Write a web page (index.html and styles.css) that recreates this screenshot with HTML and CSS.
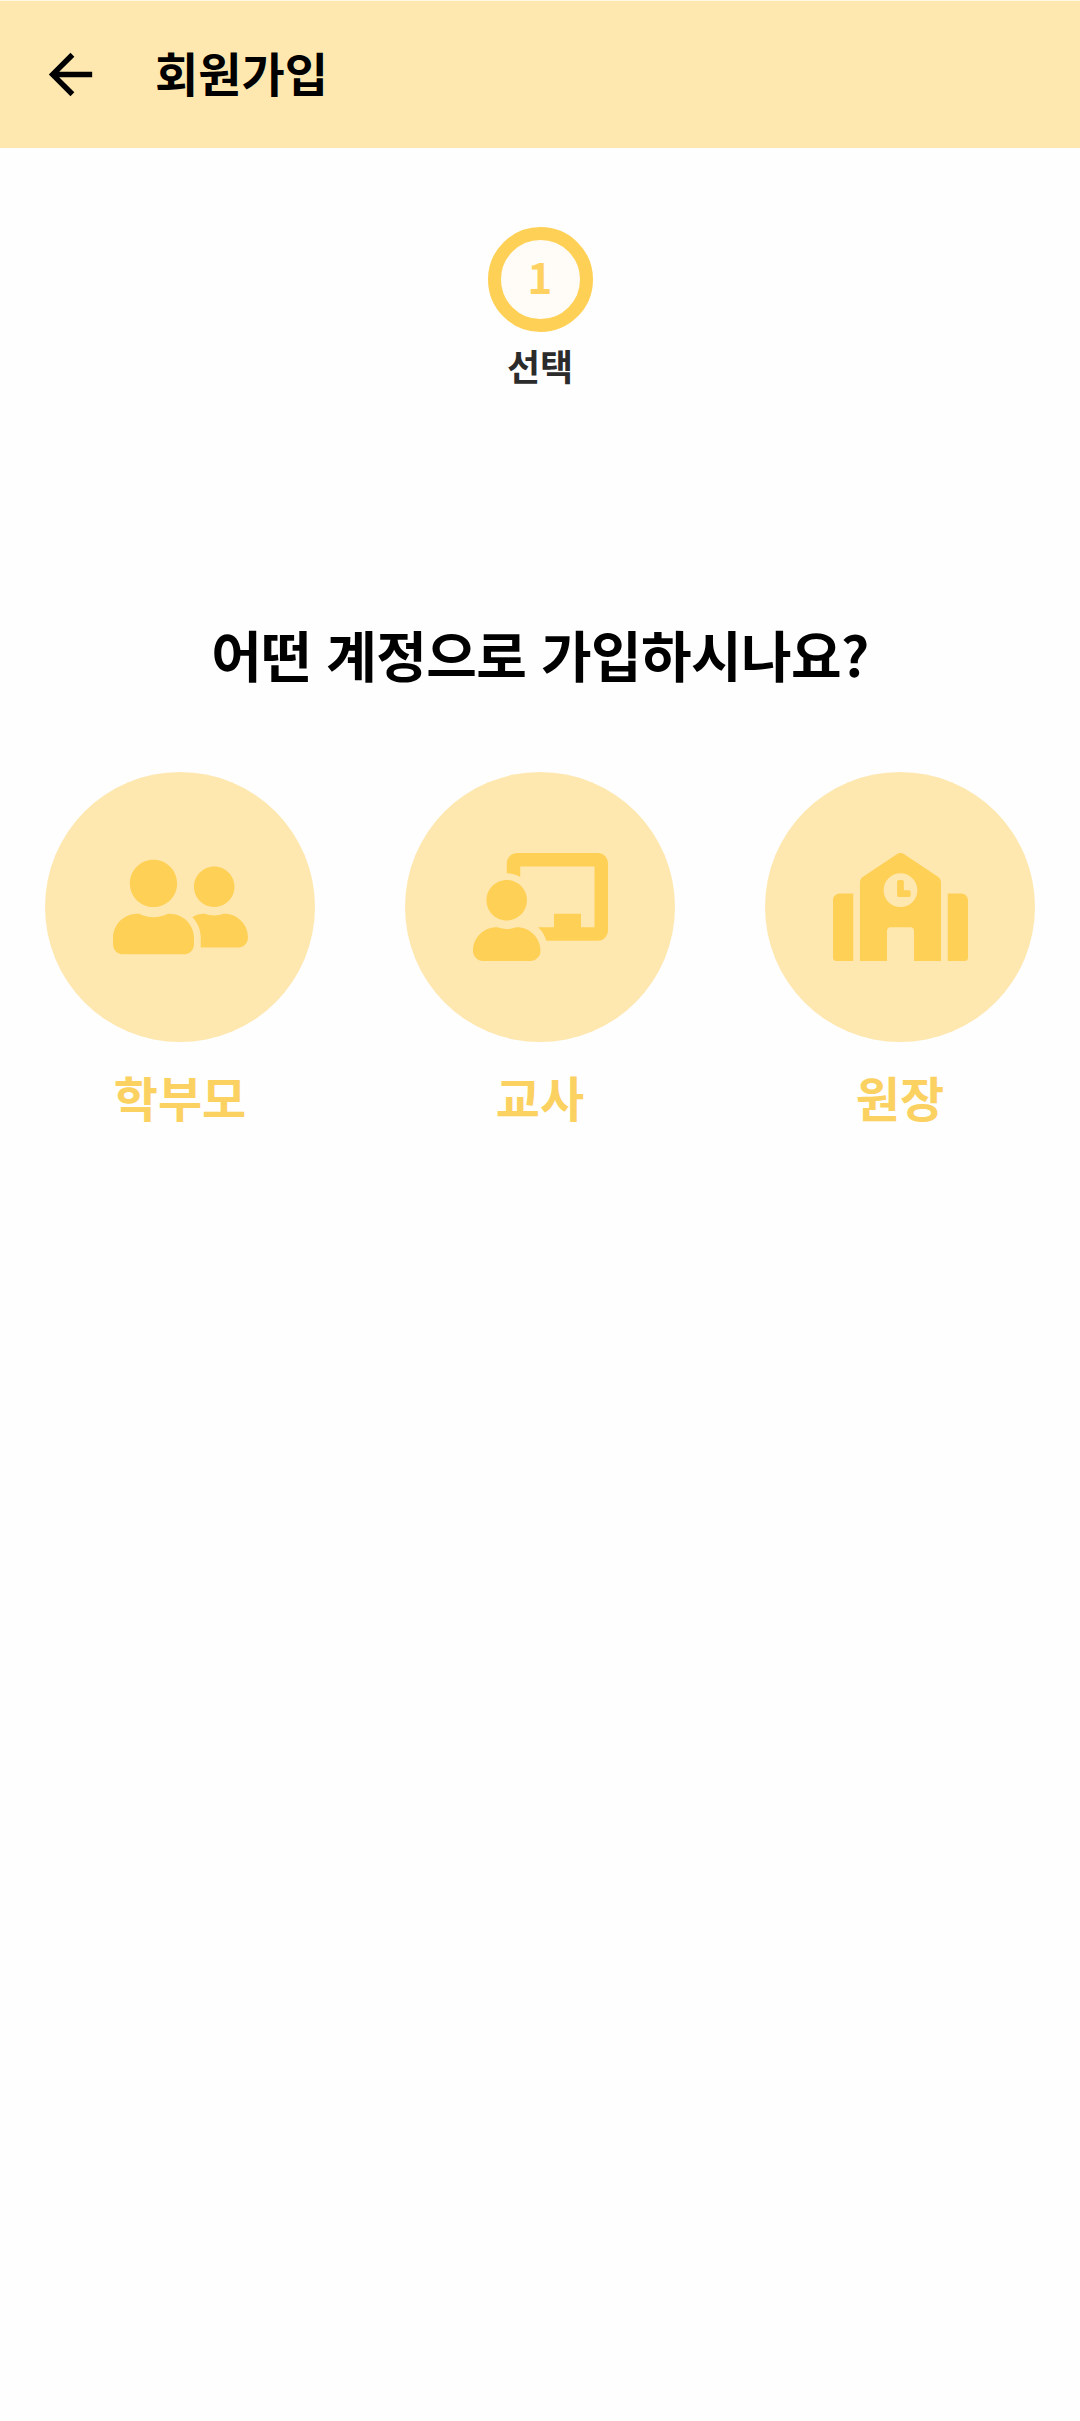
FILE: index.html
```html
<!DOCTYPE html>
<html lang="ko">
<head>
<meta charset="utf-8">
<title>회원가입</title>
<link rel="stylesheet" href="styles.css">
</head>
<body>
<header class="app-bar">
  <svg class="back" viewBox="0 0 24 24" aria-label="뒤로"><path d="M20 11H7.83l5.59-5.59L12 4l-8 8 8 8 1.41-1.41L7.83 13H20v-2z"/></svg>
  <h1 class="title">회원가입</h1>
</header>
<main class="content">
  <div class="step">
    <div class="step-number"><span class="digit">1</span></div>
    <span class="step-label">선택</span>
  </div>
  <h2 class="question">어떤 계정으로 가입하시나요?</h2>
  <div class="accounts">
    <div class="account">
      <div class="circle">
        <svg class="icon" viewBox="0 0 640 512"><path d="M192 256c61.9 0 112-50.1 112-112S253.9 32 192 32 80 82.1 80 144s50.1 112 112 112zm76.8 32h-8.3c-20.8 10-43.9 16-68.5 16s-47.6-6-68.5-16h-8.3C51.6 288 0 339.6 0 403.2V432c0 26.5 21.5 48 48 48h288c26.5 0 48-21.5 48-48v-28.8c0-63.6-51.6-115.2-115.2-115.2zM480 256c53 0 96-43 96-96s-43-96-96-96-96 43-96 96 43 96 96 96zm48 32h-3.8c-13.9 4.8-28.6 8-44.2 8s-30.3-3.2-44.2-8H432c-20.4 0-39.2 5.9-55.7 15.4 24.4 26.3 39.7 61.2 39.7 99.8v38.4c0 2.2-.5 4.3-.6 6.4H592c26.5 0 48-21.5 48-48 0-61.9-50.1-112-112-112z"/></svg>
      </div>
      <span class="name">학부모</span>
    </div>
    <div class="account">
      <div class="circle">
        <svg class="icon" viewBox="0 0 640 512"><path d="M208 352c-2.39 0-4.78.35-7.06 1.09C187.98 357.3 174.35 360 160 360c-14.35 0-27.98-2.7-40.95-6.91-2.28-.74-4.66-1.09-7.05-1.09C49.94 352-.33 402.48 0 464.62.14 490.88 21.73 512 48 512h224c26.27 0 47.86-21.12 48-47.38.33-62.14-49.94-112.62-112-112.62zm-48-32c53.02 0 96-42.98 96-96s-42.98-96-96-96-96 42.98-96 96 42.98 96 96 96zM592 0H208c-26.47 0-48 22.25-48 49.59V96c23.42 0 45.1 6.78 64 17.8V64h352v288h-64v-64H384v64h-76.24c19.1 16.69 33.12 38.73 39.69 64H592c26.47 0 48-22.25 48-49.59V49.59C640 22.25 618.47 0 592 0z"/></svg>
      </div>
      <span class="name">교사</span>
    </div>
    <div class="account">
      <div class="circle">
        <svg class="icon" viewBox="0 0 640 512"><path d="M0 224v272c0 8.84 7.16 16 16 16h80V192H32c-17.67 0-32 14.33-32 32zm360-48h-24v-40c0-4.42-3.58-8-8-8h-16c-4.42 0-8 3.58-8 8v64c0 4.42 3.58 8 8 8h48c4.42 0 8-3.58 8-8v-16c0-4.42-3.58-8-8-8zm137.75-63.96l-160-106.67a32.02 32.02 0 0 0-35.5 0l-160 106.67A32.002 32.002 0 0 0 128 138.66V512h128V368c0-8.84 7.16-16 16-16h96c8.84 0 16 7.16 16 16v144h128V138.67c0-10.7-5.35-20.7-14.25-26.63zM320 256c-44.18 0-80-35.82-80-80s35.82-80 80-80 80 35.82 80 80-35.82 80-80 80zm288-64h-64v320h80c8.84 0 16-7.16 16-16V224c0-17.67-14.33-32-32-32z"/></svg>
      </div>
      <span class="name">원장</span>
    </div>
  </div>
</main>
</body>
</html>
```
FILE: styles.css
```css
* { box-sizing: border-box; }
body {
  margin: 0;
  min-height: 2421px;
  background: #fefefe;
  font-family: "Noto Sans CJK KR", sans-serif;
  color: #000;
}
.app-bar {
  height: 148px;
  padding-left: 38px;
  border-top: 1px solid #fef8e4;
  display: flex;
  align-items: center;
  background: #fee8b0;
}
.back { width: 65px; height: 65px; }
.title {
  margin: 0 0 5px 52px;
  font-size: 47px;
  line-height: 60px;
  font-weight: 700;
}
.content {
  display: flex;
  flex-direction: column;
  align-items: center;
}
.step {
  margin-top: 79px;
  display: flex;
  flex-direction: column;
  align-items: center;
}
.step-number {
  width: 105px;
  height: 105px;
  border: 13px solid #ffd056;
  border-radius: 50%;
  background: #fffcf7;
  color: #fed161;
  display: flex;
  align-items: center;
  justify-content: center;
}
.digit {
  padding-bottom: 7px;
  font-size: 42px;
  line-height: 60px;
  font-weight: 700;
}
.step-label {
  margin-top: 7px;
  font-size: 36px;
  line-height: 52px;
  font-weight: 700;
  color: #2b2b2b;
}
.question {
  margin: 222px 0 0;
  font-size: 55px;
  line-height: 80px;
  font-weight: 700;
  letter-spacing: -0.6px;
  white-space: nowrap;
}
.accounts {
  margin-top: 79px;
  width: 100%;
  display: grid;
  grid-template-columns: repeat(3, 1fr);
}
.account {
  display: flex;
  flex-direction: column;
  align-items: center;
}
.circle {
  width: 270px;
  height: 270px;
  border-radius: 50%;
  background: #fee8b0;
  display: flex;
  align-items: center;
  justify-content: center;
}
.icon { width: 135px; height: 108px; fill: #ffd056; }
.name {
  margin-top: 19px;
  font-size: 48px;
  line-height: 70px;
  font-weight: 700;
  color: #fbd161;
}
```
